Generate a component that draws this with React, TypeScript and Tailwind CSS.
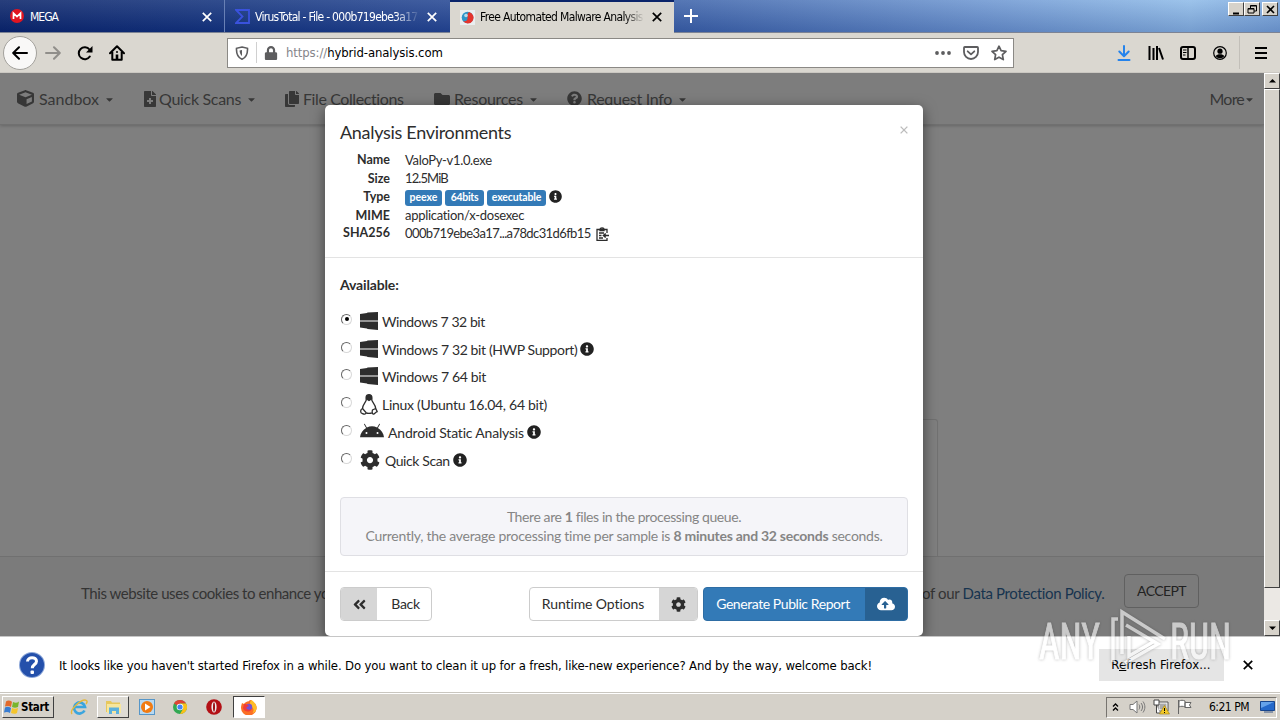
import React from "react";
import {
  FaAndroid,
  FaAngleDoubleLeft,
  FaCaretDown,
  FaCloudUploadAlt,
  FaCog,
  FaCopy,
  FaCube,
  FaFileMedical,
  FaFolder,
  FaInfoCircle,
  FaLock,
  FaQuestionCircle,
} from "react-icons/fa";

const CloseIcon = ({ size = 10, className = "" }: { size?: number; className?: string }) => (
  <svg width={size} height={size} viewBox="0 0 10 10" className={className} fill="none" stroke="currentColor" strokeWidth="1.7">
    <path d="M0.8 0.8 9.2 9.2M9.2 0.8 0.8 9.2" />
  </svg>
);

const TabStrip = () => (
  <div className="h-[33px] flex shrink-0 bg-[linear-gradient(to_bottom,rgba(255,255,255,0.12),rgba(0,20,90,0.18)),linear-gradient(to_right,#0a246a_0%,#15357f_18%,#2a4c98_38%,#4066ac_54%,#6f98d2_77%,#8fbbe8_93%,#7ba7dc_100%)] border-b border-[#7c8394] text-[12px] text-white">
    <div className="w-[225px] flex items-center pl-[10px] border-r border-[#6880b5]">
      <svg width="14" height="14" viewBox="0 0 14 14" className="shrink-0">
        <circle cx="7" cy="7" r="7" fill="#e11521" />
        <path d="M3.5 10V4.2L7 7.6l3.500-3.400V10" fill="none" stroke="#fff" strokeWidth="1.700" />
      </svg>
      <span className="ml-[6px] mt-px flex-1 tracking-[-1px]">MEGA</span>
      <CloseIcon className="mr-[12px] mt-px" />
    </div>
    <div className="w-[225px] flex items-center pl-[10px]">
      <svg width="15" height="15" viewBox="0 0 15 15" className="shrink-0" fill="none" stroke="#3a52dd" strokeWidth="1.800">
        <path d="M1 1h13v13H1l6.500-6.500z" />
      </svg>
      <span className="ml-[5px] mt-px w-[165px] overflow-hidden tracking-[-0.72px] [mask-image:linear-gradient(to_right,#000_85%,transparent)]">VirusTotal - File - 000b719ebe3a17</span>
      <CloseIcon className="ml-[7px] mt-px shrink-0" />
    </div>
    <div className="w-[224px] h-[33px] flex items-center pl-[10px] pb-px bg-[#dad7d0] text-black border-t-2 border-[#0a246a]">
      <svg width="15" height="15" viewBox="0 0 15 15" className="shrink-0">
        <rect width="15" height="15" fill="#e9eef0" />
        <circle cx="7.500" cy="7.500" r="5.800" fill="#2e95c9" />
        <path d="M9 2a5.800 5.800 0 1 1-6 9c3 1 5-1 4.500-4S8 3 9 2z" fill="#e3342d" />
        <circle cx="6" cy="5.500" r="1.800" fill="#b7dbea" />
      </svg>
      <span className="ml-[5px] w-[164px] overflow-hidden tracking-[-0.64px] [mask-image:linear-gradient(to_right,#000_88%,transparent)]">Free Automated Malware Analysis</span>
      <CloseIcon className="ml-[8px] shrink-0" />
    </div>
    <svg width="14" height="14" viewBox="0 0 14 14" className="ml-[10px] mt-[9px]" stroke="#fff" strokeWidth="2">
      <path d="M7 0v14M0 7h14" />
    </svg>
    <div className="ml-auto mr-[2px] mt-[2px] flex h-[14px]">
      <WindowButton><path d="M4 10.500h6" strokeWidth="2" /></WindowButton>
      <WindowButton><path d="M5.500 5V2.500h6V8H9M3 5.500h6V10H3zM3 6h6M5.500 3h6" /></WindowButton>
      <div className="w-[2px]" />
      <WindowButton><path d="m4 3 7 7M11 3l-7 7" strokeWidth="1.600" /></WindowButton>
    </div>
  </div>
);

const WindowButton = ({ children }: { children: React.ReactNode }) => (
  <div className="w-[16px] h-[14px] bg-[#d6d2ca] border border-t-white border-l-white border-b-[#404040] border-r-[#404040]">
    <svg width="14" height="12" viewBox="0 0 14 12" fill="none" stroke="#000">{children}</svg>
  </div>
);

const Toolbar = () => (
  <div className="h-[40px] shrink-0 flex items-center bg-[#dad7d0] border-b border-[#cbc8c2] text-black">
    <div className="ml-[3px] w-[34px] h-[34px] shrink-0 rounded-full border border-[#a3a19c] bg-[#f9f8f7] flex items-center justify-center">
      <svg width="16" height="14" viewBox="0 0 16 14" fill="none" stroke="#000" strokeWidth="2" strokeLinecap="round" strokeLinejoin="round">
        <path d="M15 7H1.500M7 1.200 1.200 7 7 12.800" />
      </svg>
    </div>
    <svg width="16" height="14" viewBox="0 0 16 14" className="ml-[8px]" fill="none" stroke="#908e8a" strokeWidth="2" strokeLinecap="round" strokeLinejoin="round">
      <path d="M1 7h13.500M9 1.200 14.800 7 9 12.800" />
    </svg>
    <svg width="16" height="16" viewBox="0 0 16 16" className="ml-[16px]" fill="none" stroke="#000" strokeWidth="2" strokeLinecap="round">
      <path d="M12.800 11.500A6 6 0 1 1 12.500 4.500" />
      <path d="M15.500 1v6.500H9z" fill="#000" stroke="none" />
    </svg>
    <svg width="16" height="16" viewBox="0 0 16 16" className="ml-[16px]" fill="none" stroke="#000" strokeWidth="2" strokeLinecap="round" strokeLinejoin="round">
      <path d="M1 8.300 8 1.300l7 7M3.300 7v7.800h9.400V7" />
      <path d="M6.700 15V9.500h2.600V15z" fill="#000" stroke="none" />
      <circle cx="8" cy="7" r="1" fill="#000" stroke="none" />
    </svg>
    <div className="ml-[102px] w-[787px] h-[30px] flex items-center bg-white border border-[#8b8985] text-[#5d5d5f]">
      <svg width="14" height="14" viewBox="0 0 14 14" className="ml-[7px]" fill="none" stroke="currentColor" strokeWidth="1.600">
        <path d="M7 1 12.500 2.300C12.800 8 11 11.500 7 13.200 3 11.500 1.200 8 1.500 2.300z" />
        <path d="M7 4v6C5.500 9 4.700 7.300 4.600 4.600z" fill="currentColor" stroke="none" />
      </svg>
      <div className="ml-[7px] w-px h-[21px] bg-[#d0d0d0]" />
      <FaLock className="ml-[7px] size-[14px]" />
      <span className="ml-[8px] mt-px flex-1 text-[13px] text-[#85858a] tracking-[-0.1px]">https://<span className="text-black">hybrid-analysis.com</span></span>
      <svg width="16" height="4" viewBox="0 0 16 4" fill="currentColor">
        <circle cx="2" cy="2" r="1.900" /><circle cx="8" cy="2" r="1.900" /><circle cx="14" cy="2" r="1.900" />
      </svg>
      <svg width="16" height="14" viewBox="0 0 16 14" className="ml-[12px]" fill="none" stroke="currentColor" strokeWidth="1.800" strokeLinejoin="round" strokeLinecap="round">
        <path d="M1 1.800C1 1.300 1.300 1 1.800 1h12.400c.500 0 .800.300.800.800V6a7 7 0 0 1-14 0z" />
        <path d="m4.700 5.300 3.300 3 3.300-3" />
      </svg>
      <svg width="16" height="16" viewBox="0 0 16 16" className="ml-[12px] mr-[6px]" fill="none" stroke="currentColor" strokeWidth="1.700" strokeLinejoin="round">
        <path d="m8 1.200 2.100 4.500 4.900.600-3.600 3.400.900 4.900L8 12.200l-4.300 2.400.900-4.900L1 6.300l4.900-.600z" />
      </svg>
    </div>
    <svg width="14" height="16" viewBox="0 0 14 16" className="ml-[103px]" fill="none" stroke="#2483ec" strokeWidth="2" strokeLinecap="round" strokeLinejoin="round">
      <path d="M7 1v10M2.300 6.500 7 11.200l4.700-4.700M1.500 15h11" />
    </svg>
    <svg width="16" height="14" viewBox="0 0 16 14" className="ml-[17px]" fill="none" stroke="#000" strokeWidth="2">
      <path d="M1.500 0v14M5.500 2v12M9 0v14M11 2l4 11.500" />
    </svg>
    <svg width="16" height="14" viewBox="0 0 16 14" className="ml-[16px]" fill="none" stroke="#000" strokeWidth="2">
      <rect x="1" y="1" width="14" height="12" rx="2" />
      <path d="M8 1v12" strokeWidth="1.500" />
      <path d="M3 4h3.500M3 6.500h3.500M3 9h2.500" strokeWidth="1" />
    </svg>
    <svg width="14" height="14" viewBox="0 0 14 14" className="ml-[17px]">
      <circle cx="7" cy="7" r="6.300" fill="none" stroke="#000" strokeWidth="1.200" />
      <circle cx="7" cy="5.200" r="2.600" />
      <path d="M2.700 10.300C3.500 8.600 5 8.200 7 8.200s3.500.400 4.300 2.100A5.200 5.200 0 0 1 7 12.300a5.200 5.200 0 0 1-4.300-2z" />
    </svg>
    <div className="ml-[12px] w-px h-[33px] bg-[#c2bfb9]" />
    <svg width="12" height="12" viewBox="0 0 12 12" className="ml-[15px]" stroke="#000" strokeWidth="2">
      <path d="M0 1h12M0 6h12M0 11h12" />
    </svg>
  </div>
);

const SiteNav = () => (
  <div className="h-[52px] shrink-0 flex items-center bg-[#7d7d7d] border-b border-[#707070] shadow-[0_1px_3px_rgba(0,0,0,0.2)] text-[16px] text-[#373737]">
    <div className="ml-[17px] w-[126px] flex items-center"><FaCube className="size-[17px] mr-[5px]" /><span>Sandbox</span><FaCaretDown className="ml-[5px] mt-[2px] size-[11px]" /></div>
    <div className="w-[141px] flex items-center"><FaFileMedical className="size-[16px] mr-[1px] ml-[-1px]" /><span className="tracking-[-0.3px]">Quick Scans</span><FaCaretDown className="ml-[5px] mt-[2px] size-[11px]" /></div>
    <div className="w-[150px] flex items-center"><FaCopy className="size-[16px] mr-[3px]" /><span className="tracking-[-0.4px]">File Collections</span></div>
    <div className="w-[133px] flex items-center"><FaFolder className="size-[16px] mr-[4px]" /><span className="tracking-[-0.25px]">Resources</span><FaCaretDown className="ml-[5px] mt-[2px] size-[11px]" /></div>
    <div className="flex items-center"><FaQuestionCircle className="size-[15px] mr-[5px]" /><span className="tracking-[-0.3px]">Request Info</span><FaCaretDown className="ml-[5px] mt-[2px] size-[11px]" /></div>
    <div className="ml-auto mr-[9px] flex items-center"><span className="tracking-[-0.8px]">More</span><FaCaretDown className="mt-[2px] size-[11px]" /></div>
  </div>
);

const Scrollbar = () => (
  <div className="w-[16px] shrink-0 flex flex-col bg-[#ebe8e4]">
    <ScrollArrow d="M4 8.500h7L7.500 5z" />
    <div className="h-[499px] bg-[#d6d2ca] border border-t-white border-l-white border-b-[#404040] border-r-[#404040]" />
    <div className="flex-1" />
    <ScrollArrow d="M4 5.500h7L7.500 9z" />
  </div>
);

const ScrollArrow = ({ d }: { d: string }) => (
  <div className="h-[16px] shrink-0 bg-[#d6d2ca] border border-t-white border-l-white border-b-[#404040] border-r-[#404040]">
    <svg width="14" height="14" viewBox="0 0 14 14"><path d={d} /></svg>
  </div>
);

const WindowsLogo = () => (
  <svg width="18" height="18" viewBox="0 0 18 18" fill="currentColor">
    <path d="M0 2 7 1l.500-.500L18 0v8.500H0zM0 9.500h18V18L7.500 17 7 16.500 0 15.500z" />
  </svg>
);

const LinuxLogo = () => (
  <svg width="18" height="21" viewBox="0 0 18 21" fill="none" stroke="currentColor" strokeWidth="1.300">
    <path d="M6.200 3.500C6.200 1.500 7.300.700 9 .700s2.800 1 2.800 3v2.500c.400 1.800 3.800 4.500 3.900 8.300M6.200 3.500v2.800C5.500 8.500 2.500 11 2.500 14.500" />
    <path d="M6.500 4V2.500C7 1 11 1 11.500 2.500V5L9 6.500 6.500 5z" fill="currentColor" />
    <path d="M2.500 14.500 6 18.500c0 2-2 1.800-3.500 1.100C.500 19 .500 18.500.800 17c-.300-1.500.700-2 1.700-2.500zM15.700 14.500 12.500 16c-.500 1.500-.500 4.300 1 4.100 1.300-.400 1.500-1.500 3.700-2.400-.500-1.200-.800-1.700-1.500-3.200zM6 18.800c2 .700 4 .700 6 0" />
  </svg>
);

const Clipboard = () => (
  <svg width="13" height="14" viewBox="0 0 13 14" fill="none" stroke="currentColor" strokeWidth="1.300">
    <path d="M11 6V2.500H1v10.800h10V11M4 2.500C4 .300 8 .300 8 2.500v1.200H4zM3 6h5M3 8.500h2.500M3 11h4" />
    <path d="M13 8.500H8M9.700 6.500 7.500 8.500l2.200 2" strokeWidth="1.600" />
  </svg>
);

const details = [
  { label: "Name", value: "ValoPy-v1.0.exe", height: "h-[19px]", spacing: "tracking-[-0.33px]" },
  { label: "Size", value: "12.5MiB", height: "h-[18px]", spacing: "tracking-[-0.9px]" },
  { label: "Type", value: "", height: "h-[19px]", spacing: "" },
  { label: "MIME", value: "application/x-dosexec", height: "h-[18px]", spacing: "tracking-[-0.3px] mb-px" },
  { label: "SHA256", value: "000b719ebe3a17...a78dc31d6fb15", height: "h-[17px]", spacing: "tracking-[-0.6px]" },
];

const environments = [
  { name: "Windows 7 32 bit", icon: <WindowsLogo />, gap: "ml-[4px] tracking-[-0.42px]", info: false },
  { name: "Windows 7 32 bit (HWP Support)", icon: <WindowsLogo />, gap: "ml-[4px] tracking-[-0.37px]", info: true },
  { name: "Windows 7 64 bit", icon: <WindowsLogo />, gap: "ml-[4px] tracking-[-0.36px]", info: false },
  { name: "Linux (Ubuntu 16.04, 64 bit)", icon: <LinuxLogo />, gap: "ml-[4px] tracking-[-0.28px]", info: false },
  { name: "Android Static Analysis", icon: <FaAndroid className="size-[24px]" />, gap: "ml-[4px] tracking-[-0.18px]", info: true },
  { name: "Quick Scan", icon: <FaCog className="size-[20px]" />, gap: "ml-[5px] tracking-[-0.4px]", info: true },
];

const AnalysisModal = () => (
  <div className="absolute left-[325px] top-[32px] w-[598px] h-[531px] flex flex-col bg-white rounded-[5px] shadow-[0_4px_14px_rgba(0,0,0,0.5)] text-[#2d2d2d] text-[13px]">
    <div className="h-[153px] shrink-0 border-b border-[#e3e3e3] px-[15px] pt-[15px]">
      <div className="h-[24px] flex items-center justify-between text-[18px]">
        <h4 className="tracking-[-0.3px]">Analysis Environments</h4>
        <CloseIcon size={8} className="text-[#bcbcbc] mb-[4px]" />
      </div>
      <div className="mt-[7px]">
        {details.map((row) => (
          <div key={row.label} className={`${row.height} flex items-center`}>
            <span className="w-[50px] mr-[15px] text-right font-bold text-[12.500px]">{row.label}</span>
            {row.label === "Type" ? (
              <div className="flex items-center gap-[3px] text-[10.500px] font-bold text-white">
                <span className="w-[37px] h-[16px] flex items-center justify-center rounded-[3px] bg-[#337ab7]">peexe</span>
                <span className="w-[39px] h-[16px] flex items-center justify-center rounded-[3px] bg-[#337ab7] tracking-[-0.3px]">64bits</span>
                <span className="w-[59px] h-[16px] flex items-center justify-center rounded-[3px] bg-[#337ab7] tracking-[-0.15px]">executable</span>
                <FaInfoCircle className="size-[13px] text-[#222] mb-[3px]" />
              </div>
            ) : (
              <span className={row.spacing}>{row.value}</span>
            )}
            {row.label === "SHA256" && <span className="ml-[5px]"><Clipboard /></span>}
          </div>
        ))}
      </div>
    </div>
    <div className="h-[314px] shrink-0 px-[15px] pt-[17px] border-b border-[#e3e3e3]">
      <div className="h-[20px] leading-[20px] text-[14px] font-bold tracking-[-0.15px]">Available:</div>
      <div className="mt-[13px]">
        {environments.map((env, i) => (
          <label key={env.name} className="h-[27.800px] flex items-center text-[14px]">
            <span className="ml-[1px] mr-[8px] mb-[5px] size-[11px] shrink-0 rounded-full border border-t-[#666] border-l-[#666] border-b-[#d8d8d8] border-r-[#d8d8d8] flex items-center justify-center">
              {i === 0 && <span className="size-[4px] rounded-full bg-black" />}
            </span>
            <span className="mb-[2px]">{env.icon}</span>
            <span className={`${env.gap} mb-px`}>{env.name}</span>
            {env.info && <FaInfoCircle className="ml-[3px] mb-[2px] size-[14px] text-[#222]" />}
          </label>
        ))}
      </div>
      <div className="mt-[22px] h-[59px] pt-[9px] rounded-[4px] border border-[#dfdfe4] bg-[#f5f5f9] text-center text-[14px] leading-[19px] text-[#858585]">
        <p className="tracking-[-0.4px]">There are <b>1</b> files in the processing queue.</p>
        <p className="tracking-[-0.26px]">Currently, the average processing time per sample is <b>8 minutes and 32 seconds</b> seconds.</p>
      </div>
    </div>
    <div className="flex-1 flex items-center px-[15px] text-[14px]">
      <button className="w-[92px] h-[34px] flex rounded-[4px] border border-[#ccc] overflow-hidden">
        <span className="w-[36px] h-full flex items-center justify-center bg-[#d6d6d6]"><FaAngleDoubleLeft className="size-[15px]" /></span>
        <span className="flex-1 self-center pl-[3px] pb-px tracking-[-0.3px]">Back</span>
      </button>
      <button className="ml-auto w-[169px] h-[34px] flex rounded-[4px] border border-[#ccc] overflow-hidden">
        <span className="flex-1 self-center pb-px pr-[3px] tracking-[-0.1px]">Runtime Options</span>
        <span className="w-[38px] h-full flex items-center justify-center bg-[#d6d6d6]"><FaCog className="size-[15px]" /></span>
      </button>
      <button className="ml-[5px] w-[205px] h-[34px] flex rounded-[4px] border border-[#2e6da4] bg-[#337ab7] text-white overflow-hidden">
        <span className="flex-1 self-center pb-px pr-[3px] tracking-[-0.43px]">Generate Public Report</span>
        <span className="w-[42px] h-full flex items-center justify-center bg-[#286192]"><FaCloudUploadAlt className="size-[18px]" /></span>
      </button>
    </div>
  </div>
);

const CookieBar = () => (
  <div className="h-[80px] shrink-0 flex items-center bg-[#7b7b7b] border-t border-[#707070] pl-[81px] pb-[8px] text-[15px] text-[#343434]">
    <span className="w-[841px] pt-[2px] tracking-[-0.44px]">This website uses cookies to enhance your</span>
    <span className="w-[202px] pt-[2px] tracking-[-0.35px]">of our <span className="text-[#17344f]">Data Protection Policy.</span></span>
    <button className="w-[75px] h-[34px] mt-[-3px] pb-[2px] rounded-[4px] border border-[#606060] text-[14px] tracking-[-0.6px] text-[#222]">ACCEPT</button>
  </div>
);

const Notification = () => (
  <div className="h-[57px] shrink-0 flex items-center bg-white border-t border-[#c6c6c6] border-b border-b-[#c9c6bf] text-[13px] text-black">
    <svg width="26" height="26" viewBox="0 0 26 26" className="ml-[19px]">
      <circle cx="13" cy="13" r="13" fill="#8ba6d8" />
      <circle cx="13" cy="13" r="12" fill="#2450ab" />
      <path d="M8.500 9.500C8.700 4.300 17.500 4.500 17.500 9.200c0 3.400-4.200 3.300-4.200 7" fill="none" stroke="#fff" strokeWidth="3" />
      <rect x="11.500" y="18.500" width="3.500" height="3.500" rx="1" fill="#fff" />
    </svg>
    <span className="ml-[14px] mt-[2px] w-[1040px] tracking-[-0.14px]">It looks like you haven't started Firefox in a while. Do you want to clean it up for a fresh, like-new experience? And by the way, welcome back!</span>
    <button className="w-[125px] h-[32px] bg-[#e5e5e5] pr-px tracking-[0.1px]">R<u>e</u>fresh Firefox...</button>
    <CloseIcon className="ml-[19px]" />
  </div>
);

const Taskbar = () => (
  <div className="h-[27px] shrink-0 flex items-center bg-[#d5d1c9] border-t border-white text-[12px] text-black">
    <button className="ml-[2px] w-[52px] h-[22px] flex items-center border border-t-white border-l-white border-b-[#404040] border-r-[#404040] text-[11.500px] font-bold">
      <svg width="16" height="16" viewBox="0 0 16 16" className="ml-px mr-px">
        <path d="M2 2.500c2-1.500 4-1 6 .300L7 8C5 6.500 3 6.800 1 7.500z" fill="#e36a2b" />
        <path d="M9 3c2 1 4 1 6-.500L14 8c-2 1-4 1-6 0z" fill="#79b52c" />
        <path d="M1 8.500c2-1 4-.800 6 .500L6 14c-2-1.500-4-1.200-6-.500z" fill="#397dd1" />
        <path d="M8 9c2 1 4 1 6 0l-1 5c-2 1.200-4 1-6 0z" fill="#f5c52b" />
      </svg>
      <span className="tracking-[-0.3px] pt-px">Start</span>
    </button>
    <svg width="18" height="18" viewBox="0 0 18 18" className="ml-[16px]" fill="none">
      <path d="M14.500 12.500A5.500 5.500 0 1 1 15 9H5" stroke="#3aa5de" strokeWidth="2.700" />
      <path d="M2 16C-1 12 12 0 16.500 2.500c1 .800.300 2.500-.500 3.500" stroke="#e4b83b" strokeWidth="1.400" />
    </svg>
    <div className="ml-[9px] w-[32px] h-[22px] flex items-center justify-center bg-[#dedbd4] border border-t-white border-l-white border-b-[#404040] border-r-[#404040]">
      <svg width="17" height="16" viewBox="0 0 17 16">
        <path d="M1 2h5l1 1.500h8V13H1z" fill="#e7c85d" />
        <path d="M2 5h14v9H2z" fill="#f7e69d" />
        <path d="M4 15V8.500h10V15h-3v-3H7v3z" fill="#5db1dd" />
      </svg>
    </div>
    <svg width="16" height="16" viewBox="0 0 16 16" className="ml-[10px]">
      <rect x=".500" y=".500" width="15" height="15" fill="#b8d9f1" stroke="#5696c8" />
      <circle cx="8" cy="8" r="6" fill="#f17b12" />
      <path d="M6 4.500 11.500 8 6 11.500z" fill="#fff" />
    </svg>
    <svg width="14" height="14" viewBox="0 0 14 14" className="ml-[18px]">
      <circle cx="7" cy="7" r="7" fill="#32a852" />
      <path d="M7 7 1 3.400A7 7 0 0 1 13.100 3.500H7z" fill="#df4335" />
      <path d="M7 3.500h6.100A7 7 0 0 1 7 14l3-5z" fill="#fbc116" />
      <circle cx="7" cy="7" r="3.300" fill="#fff" />
      <circle cx="7" cy="7" r="2.600" fill="#4285f4" />
    </svg>
    <svg width="16" height="16" viewBox="0 0 16 16" className="ml-[19px]">
      <circle cx="8" cy="8" r="7.800" fill="#b31015" />
      <ellipse cx="8" cy="8" rx="2.600" ry="5.500" fill="#eee" />
      <ellipse cx="8" cy="8" rx="1" ry="4.800" fill="#9c1015" />
    </svg>
    <div className="ml-[11px] w-[32px] h-[22px] flex items-center justify-center bg-white border border-t-[#404040] border-l-[#404040] border-b-white border-r-white">
      <svg width="16" height="16" viewBox="0 0 16 16">
        <path d="M1 4c.500 0 1.500 1 2 1C5 2 7 3 8 2c1-2 3-1 4 1 3 2 4 4 3.500 7A7.800 7.800 0 0 1 0 9c0-2 .500-3 1-5z" fill="#fb6f25" />
        <path d="M10 1c3 1 6 5 5.500 9-.700 2-2 3.500-4 4 2-3 1-5-1.500-7C8.500 5 9 2.500 10 1z" fill="#ffbd27" />
        <circle cx="8" cy="8" r="3.200" fill="#7550d4" />
        <path d="M3 5c2 0 3 .500 5 2-1 .500-2 0-2.500 1.500-1 2 3 3 5 1.500-1 4-8 3-8.500-1z" fill="#f03b38" />
      </svg>
    </div>
    <div className="ml-auto mr-[3px] w-[171px] h-[21px] flex items-center border border-t-[#77746f] border-l-[#77746f] border-b-white border-r-white">
      <svg width="7" height="8" viewBox="0 0 7 8" className="ml-[5px]" fill="none" stroke="#000" strokeWidth="1.300"><path d="m1 3.500 2.500-2.500L6 3.500M1 7.500 3.500 5 6 7.500" /></svg>
      <svg width="17" height="14" viewBox="0 0 17 14" className="ml-[10px]" fill="#fff" stroke="#777" strokeWidth="1">
        <path d="M1 4.500h3L8 1v12L4 9.500H1z" />
        <path d="M10 4.500c1 1.500 1 3.500 0 5M12 3c2 2.500 2 5.500 0 8M14 1.500c2.500 3.500 2.500 7.500 0 11" fill="none" />
      </svg>
      <svg width="17" height="16" viewBox="0 0 17 16" className="ml-[7px]">
        <path d="M5 3h10v9H5z" fill="#fff" stroke="#555" />
        <path d="M6.500 4.500h7v6h-7z" fill="#aaa" />
        <path d="M1 1h5v5H1zM3.500 6v8H7" fill="#fff" stroke="#444" />
        <path d="M11.500 6.500 16.500 15h-10z" fill="#f4ca27" stroke="#a8871a" strokeWidth=".700" />
        <path d="M11.500 9v3M11.500 13v1" stroke="#000" />
      </svg>
      <svg width="16" height="16" viewBox="0 0 16 16" className="ml-[7px]" fill="#fff" stroke="#666" strokeWidth="1">
        <path d="M1.500 1v14M2 2c2-1 4-1 6 0v6C6 7 4 7 2 8zM8 3.500h6L12.500 6 14 8.500H8z" />
      </svg>
      <span className="ml-[16px] w-[51px] tracking-[-0.5px]">6:21 PM</span>
      <svg width="15" height="12" viewBox="0 0 15 12">
        <path d="M.500.500h14v9H.500z" fill="#2468ca" stroke="#17458d" />
        <path d="M1 1h13L1 7z" fill="#65a2ea" />
        <path d="M4 11h9" stroke="#3d5986" />
      </svg>
    </div>
  </div>
);

const Watermark = () => (
  <svg width="200" height="64" viewBox="0 0 200 64" className="absolute left-[1036px] top-[606px] [filter:drop-shadow(0_0_1.500px_rgba(60,60,60,0.6))]" opacity="0.6">
    <g fill="#fff" stroke="#fff" strokeWidth="1" fontFamily="Roboto" fontSize="50">
      <text x="3" y="53" textLength="61" lengthAdjust="spacingAndGlyphs">ANY</text>
      <text x="134" y="53" textLength="61" lengthAdjust="spacingAndGlyphs">RUN</text>
    </g>
    <path d="M82 13h-5v43M86 48V6l43 27M90 19l32 19-35 20M93 30v20l24-14" fill="none" stroke="#fff" strokeWidth="3.500" />
  </svg>
);

export default function App() {
  return (
    <div className="relative w-[1280px] h-[720px] flex flex-col overflow-hidden whitespace-nowrap font-['DejaVu_Sans_Condensed','DejaVu_Sans',sans-serif] [font-stretch:condensed]">
      <TabStrip />
      <Toolbar />
      <div className="relative h-[563px] shrink-0 flex overflow-hidden font-[Lato,sans-serif]">
        <div className="flex-1 min-w-0 flex flex-col bg-[#7f7f7f]">
          <SiteNav />
          <div className="flex-1 flex flex-col justify-end items-center">
            <div className="w-[613px] h-[137px] mr-[2px] border border-b-0 border-[#717171] rounded-t-[3px]" />
          </div>
          <CookieBar />
        </div>
        <Scrollbar />
        <AnalysisModal />
      </div>
      <Notification />
      <Taskbar />
      <Watermark />
    </div>
  );
}
